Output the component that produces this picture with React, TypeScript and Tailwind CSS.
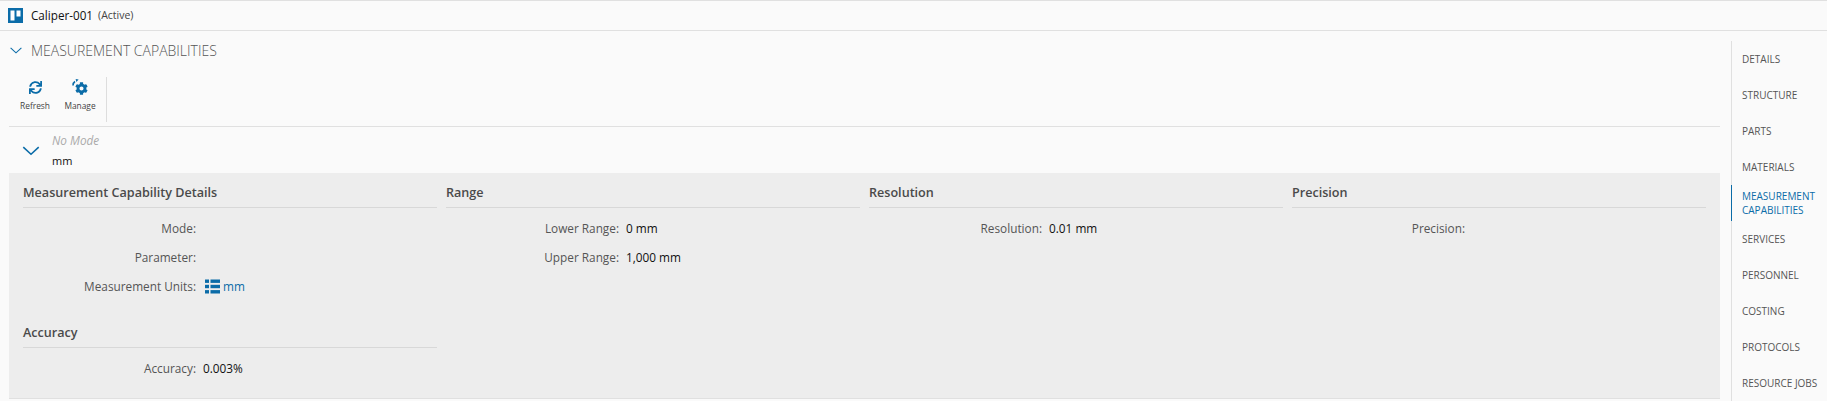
import { FaCog, FaSync } from 'react-icons/fa';

const navItems = [
  { label: 'DETAILS' },
  { label: 'STRUCTURE' },
  { label: 'PARTS' },
  { label: 'MATERIALS' },
  { label: 'MEASUREMENT CAPABILITIES', active: true },
  { label: 'SERVICES' },
  { label: 'PERSONNEL' },
  { label: 'COSTING' },
  { label: 'PROTOCOLS' },
  { label: 'RESOURCE JOBS' },
];

const Chevron = ({ className }: { className: string }) => (
  <svg viewBox="0 0 12 7" className={className} fill="none" stroke="#0b6ca8" strokeWidth="1.1">
    <path d="M0.6 0.8 L6 5.8 L11.4 0.8" />
  </svg>
);

const SectionTitle = ({ title }: { title: string }) => (
  <div className="flex h-[35px] items-center border-b border-[#d8d8d8] pt-[6px] text-[12.6px] font-semibold text-[#4a4a4a]">
    {title}
  </div>
);

const Field = ({ label, children }: { label: string; children?: React.ReactNode }) => (
  <div className="flex h-[29px] items-center text-[11.8px]">
    <div className="w-[173px] shrink-0 text-right text-[#555555]">{label}</div>
    <div className="flex items-center pl-[7px] text-[#111111]">{children}</div>
  </div>
);

const ToolButton = ({ label, children }: { label: string; children: React.ReactNode }) => (
  <div className="flex w-[44px] flex-col items-center">
    <div className="flex h-[22px] items-center text-[#0b6ca8]">{children}</div>
    <div className="mt-[1px] text-[8.4px] leading-[14px] text-[#444444]">{label}</div>
  </div>
);

export default function App() {
  return (
    <div className="h-[401px] w-[1827px] overflow-hidden bg-[#fafafa] font-['Open_Sans',sans-serif]">
      <div className="flex h-[31px] items-center border-y border-[#e0e0e0] pl-[8px]">
        <svg viewBox="0 0 15 15" className="h-[15px] w-[15px]">
          <rect width="15" height="15" fill="#0b6ca8" />
          <rect x="2.5" y="2.5" width="4" height="10" fill="#fff" />
          <rect x="8.5" y="2.5" width="4" height="6" fill="#fff" />
        </svg>
        <span className="ml-[8px] text-[11.7px] text-[#111111]">Caliper-001</span>
        <span className="ml-[5px] text-[10.5px] text-[#444444]">(Active)</span>
      </div>

      <div className="flex">
        <div className="w-[1720px] shrink-0">
          <div className="flex h-[39px] items-center pl-[10px]">
            <Chevron className="h-[7px] w-[12px]" />
            <span className="ml-[9px] text-[14px] font-light text-[#555555]">MEASUREMENT CAPABILITIES</span>
          </div>
          <div className="ml-[9px] flex h-[57px] items-start gap-x-[1px] border-b border-[#e0e0e0] pl-[4px] pt-[6px]">
            <ToolButton label="Refresh">
              <FaSync className="h-[13px] w-[13px]" />
            </ToolButton>
            <ToolButton label="Manage">
              <div className="relative h-[16px] w-[16px]">
                <FaCog className="absolute bottom-0 right-0 h-[13px] w-[13px]" />
                <svg viewBox="0 0 7 7" className="absolute left-0 top-0 h-[7px] w-[7px]" fill="none" stroke="#0b6ca8" strokeWidth="1.6">
                  <path d="M1 6.5 A4.5 4.5 0 0 1 3 2.5" />
                  <path d="M3.6 0 L6.6 0.6 L4.4 3 Z" fill="#0b6ca8" stroke="none" />
                </svg>
              </div>
            </ToolButton>
            <div className="ml-[3px] mt-[1px] h-[45px] w-px bg-[#dddddd]" />
          </div>
          <div className="flex h-[46px] pl-[22px]">
            <Chevron className="mt-[19px] h-[10px] w-[18px]" />
            <div className="ml-[12px] pt-[3px]">
              <div className="text-[11.8px] italic leading-[20px] text-[#aaaaaa]">No Mode</div>
              <div className="text-[11px] leading-[21px] text-[#111111]">mm</div>
            </div>
          </div>
          <div className="ml-[9px] grid h-[226px] grid-cols-4 gap-x-[9px] border-b border-[#e0e0e0] bg-[#ededed] px-[14px]">
            <div>
              <SectionTitle title="Measurement Capability Details" />
              <div className="pt-[6px]">
                <Field label="Mode:" />
                <Field label="Parameter:" />
                <Field label="Measurement Units:">
                  <svg viewBox="0 0 15 15" className="ml-[2px] h-[15px] w-[15px]" fill="#0b6ca8">
                    <rect x="0" y="0.5" width="4" height="3.4" />
                    <rect x="5.5" y="0.5" width="9.5" height="3.4" />
                    <rect x="0" y="5.8" width="4" height="3.4" />
                    <rect x="5.5" y="5.8" width="9.5" height="3.4" />
                    <rect x="0" y="11.1" width="4" height="3.4" />
                    <rect x="5.5" y="11.1" width="9.5" height="3.4" />
                  </svg>
                  <span className="ml-[3px] text-[#0b6ca8]">mm</span>
                </Field>
              </div>
              <div className="mt-[12px]">
                <SectionTitle title="Accuracy" />
                <div className="pt-[6px]">
                  <Field label="Accuracy:">0.003%</Field>
                </div>
              </div>
            </div>
            <div>
              <SectionTitle title="Range" />
              <div className="pt-[6px]">
                <Field label="Lower Range:">0 mm</Field>
                <Field label="Upper Range:">1,000 mm</Field>
              </div>
            </div>
            <div>
              <SectionTitle title="Resolution" />
              <div className="pt-[6px]">
                <Field label="Resolution:">0.01 mm</Field>
              </div>
            </div>
            <div>
              <SectionTitle title="Precision" />
              <div className="pt-[6px]">
                <Field label="Precision:" />
              </div>
            </div>
          </div>
        </div>

        <div className="ml-[11px] mt-[10px] h-[360px] w-[96px] border-l border-[#e0e0e0]">
          {navItems.map((item) => (
            <div
              key={item.label}
              className={`-ml-px flex h-[36px] items-center border-l pl-[10px] text-[10px] leading-[14px] ${
                item.active ? 'border-[#0b6ca8] text-[#0b6ca8]' : 'border-transparent text-[#555555]'
              }`}
            >
              {item.label}
            </div>
          ))}
        </div>
      </div>
    </div>
  );
}
